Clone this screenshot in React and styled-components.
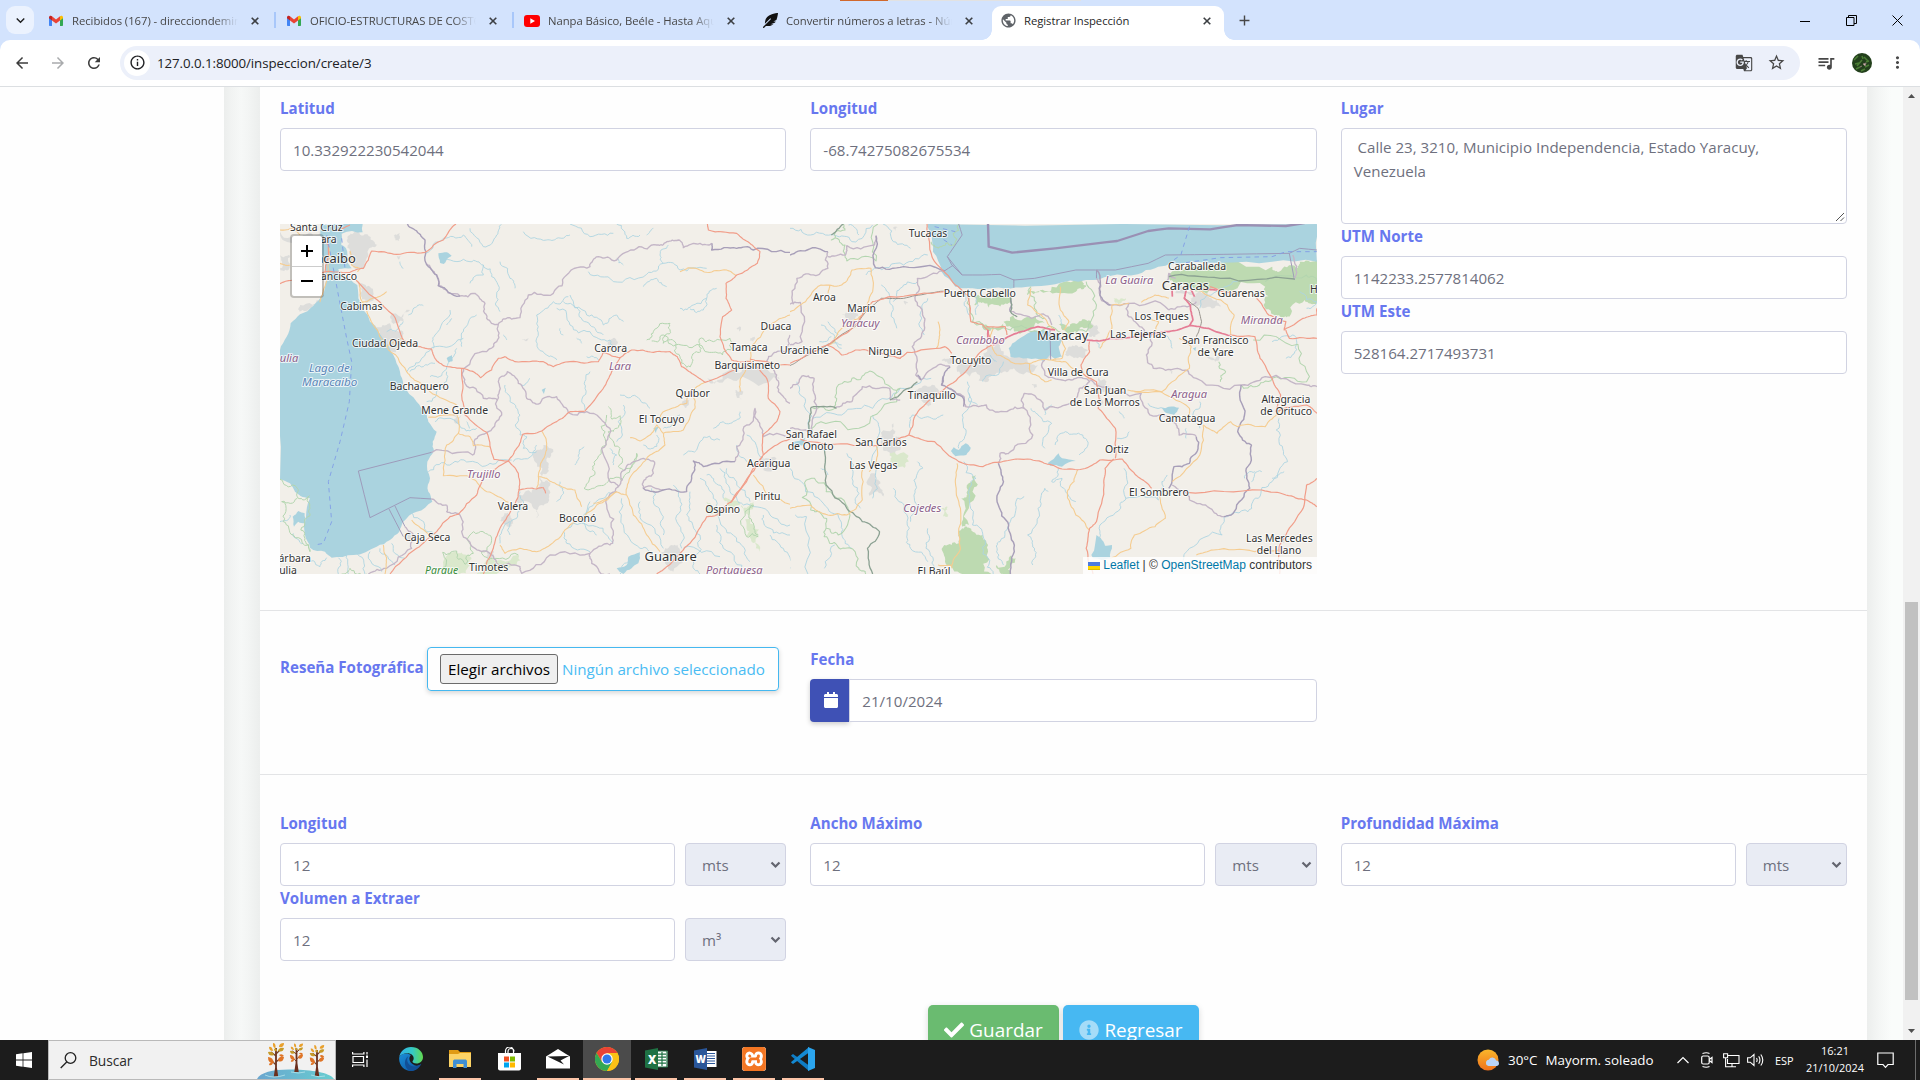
import React from "react";
import styled, { createGlobalStyle } from "styled-components";
import { MdArrowBack, MdArrowForward, MdRefresh, MdInfoOutline, MdGTranslate, MdStarBorder, MdQueueMusic, MdMoreVert, MdAdd, MdPublic, MdKeyboardArrowDown } from "react-icons/md";
import { FaCheck, FaInfoCircle, FaCalendar, FaFeatherAlt } from "react-icons/fa";
import { SiXampp } from "react-icons/si";

const ui = `"Open Sans", "Noto Sans", sans-serif`;

const GlobalStyle = createGlobalStyle`
  * { box-sizing: border-box; }
  html, body { margin: 0; padding: 0; overflow: hidden; }
  body { font-family: ${ui}; background: #fff; }
  svg { display: block; flex: none; }
`;

const Screen = styled.div`
  width: 1920px;
  height: 1080px;
  display: flex;
  flex-direction: column;
  overflow: hidden;
`;

/* ---------- Browser chrome ---------- */

const TabStrip = styled.header`
  position: relative;
  height: 40px;
  flex: none;
  display: flex;
  background: #d3e3fd;
  padding: 6px 0 0 6px;
`;
const TopProgress = styled.div`
  position: absolute;
  top: 0;
  left: 840px;
  width: 241px;
  height: 1px;
  background: linear-gradient(to right, #d0682c 48px, #e2e2e2 48px);
`;
const TabSearch = styled.div`
  width: 28px;
  height: 28px;
  border-radius: 9px;
  background: #ebf2fe;
  display: grid;
  place-items: center;
  color: #1f1f1f;
`;
const Tabs = styled.div`
  display: flex;
  margin-left: 4px;
`;
const Tab = styled.div`
  position: relative;
  width: 238px;
  height: 34px;
  padding: 0 13px 5px 10px;
  display: flex;
  align-items: center;
  color: ${(p) => (p.$active ? "#1f1f1f" : "#474747")};
  &::before {
    content: "";
    display: ${(p) => (p.$active ? "block" : "none")};
    position: absolute;
    inset: 0 4px 0 2px;
    background: #fff;
    border-radius: 9px 9px 0 0;
  }
  &::after {
    content: "";
    display: ${(p) => (p.$divider ? "block" : "none")};
    position: absolute;
    right: 0;
    top: 6px;
    width: 2px;
    height: 16px;
    background: #a8c7fa;
  }
  > * { position: relative; }
`;
const Flare = styled.span`
  && {
    position: absolute;
    bottom: 0;
    width: 10px;
    height: 10px;
    ${(p) => (p.$left ? "left: -8px" : "right: -6px")};
    background: radial-gradient(circle at ${(p) => (p.$left ? "0 0" : "10px 0")}, #d3e3fd 9.5px, #fff 10px);
  }
`;
const TabIcon = styled.span`
  width: 16px;
  margin-right: 8px;
  display: grid;
  place-items: center;
`;
const TabTitle = styled.span`
  flex: 1;
  font-size: 11.3px;
  letter-spacing: -0.05px;
  line-height: 16px;
  white-space: nowrap;
  overflow: hidden;
  ${(p) => (p.$fade ? "-webkit-mask-image: linear-gradient(to right, #000 86%, transparent); mask-image: linear-gradient(to right, #000 86%, transparent);" : "")}
`;
const TabClose = styled.span`
  width: 16px;
  margin-left: 9px;
  display: grid;
  place-items: center;
`;
const NewTab = styled.div`
  width: 28px;
  height: 28px;
  display: grid;
  place-items: center;
  color: #474747;
  margin-left: 2px;
`;
const WindowButtons = styled.div`
  margin-left: auto;
  display: flex;
  height: 28px;
  align-items: center;
`;
const WindowButton = styled.div`
  width: 46px;
  display: grid;
  place-items: center;
`;

const ToolbarBack = styled.div`
  background: #d3e3fd;
  flex: none;
`;
const Toolbar = styled.div`
  height: 47px;
  background: #fff;
  border-bottom: 1px solid #dcdfe2;
  border-radius: 10px 10px 0 0;
  display: flex;
  align-items: center;
  padding: 0 10px 1px 12px;
  color: #474747;
`;
const NavIcon = styled.div`
  width: 36px;
  display: flex;
  padding-left: 1px;
  color: ${(p) => (p.$dim ? "#a9abad" : "#3c3c3c")};
`;
const AddressBar = styled.div`
  width: 1680px;
  height: 34px;
  border-radius: 17px;
  background: #ecf0fa;
  display: flex;
  align-items: center;
  padding: 0 14px 0 4px;
  font-size: 13.3px;
  color: #202124;
`;
const SiteInfo = styled.span`
  width: 26px;
  height: 26px;
  border-radius: 13px;
  background: #fff;
  display: grid;
  place-items: center;
  margin-right: 7px;
`;
const Url = styled.span`
  flex: 1;
  letter-spacing: -0.07px;
`;
const BarIcons = styled.span`
  display: flex;
  gap: 14px;
  align-items: center;
  color: #474747;
`;
const ProfileIcons = styled.div`
  display: flex;
  align-items: center;
  margin-left: 16px;
  gap: 16px;
`;

/* ---------- Page ---------- */

const Viewport = styled.div`
  height: 953px;
  flex: none;
  display: flex;
  overflow: hidden;
`;
const Sidebar = styled.aside`
  width: 224px;
  background: #fefefe;
`;
const Main = styled.main`
  width: 1679px;
  padding: 0 36px;
  background: linear-gradient(to right, #eceeed 0, #f1f3f2 7px, #f6f8f7 17px, #f3f5f4 24px, #eceeed 36px, #eceeed 1643px, #f4f6f5 1655px, #fafcfb 1667px);
`;
const Card = styled.section`
  width: 1607px;
  height: 953px;
  background: #fefefe;
  padding-top: 9px;
  overflow: hidden;
`;
const Columns = styled.div`
  display: grid;
  grid-template-columns: repeat(${(p) => p.$n || 3}, minmax(0, 1fr));
  column-gap: 24px;
  padding: 0 ${(p) => (p.$inner ? 0 : 20)}px;
`;
const Wide = styled.div`
  grid-column: span 2;
`;
const Field = styled.div`
  width: 100%;
`;
const Label = styled.label`
  display: block;
  height: 24px;
  line-height: 24px;
  margin-bottom: 8px;
  font-size: 15.1px;
  font-weight: 700;
  color: #6777ef;
  white-space: nowrap;
`;
const Box = styled.div`
  height: ${(p) => p.$h || 43}px;
  flex: 1;
  border: 1px solid #d1d3e2;
  border-radius: ${(p) => (p.$joined ? "0 4px 4px 0" : "4px")};
  background: #fff;
  color: #6e707e;
  font-size: 15.1px;
  padding: ${(p) => (p.$area ? "6px 12px" : "0 12px")};
  line-height: ${(p) => (p.$area ? "24px" : "42px")};
  white-space: pre-wrap;
  position: relative;
`;
const Grip = styled.svg`
  position: absolute;
  right: 1px;
  bottom: 1px;
`;
const Measure = styled.div`
  display: flex;
  gap: 10px;
`;
const UnitSelect = styled.div`
  width: 101.3px;
  height: 43px;
  border: 1px solid #d1d3e2;
  border-radius: 4px;
  background: #e9ecf4;
  color: #6e707e;
  font-size: 15.1px;
  padding: 0 4px 0 16px;
  display: flex;
  align-items: center;
  justify-content: space-between;
`;
const Rule = styled.hr`
  border: 0;
  height: 1px;
  background: #e3e4e6;
  margin: ${(p) => p.$m};
`;
const FileRow = styled.div`
  display: flex;
`;
const FileLabel = styled.label`
  width: 147px;
  padding-top: 8px;
  line-height: 24px;
  font-size: 15.1px;
  font-weight: 700;
  color: #6777ef;
  white-space: nowrap;
`;
const FileInput = styled.div`
  width: 352px;
  height: 44px;
  border: 1px solid #45b8f0;
  border-radius: 4px;
  box-shadow: 0 2px 5px rgba(0, 0, 0, 0.16);
  padding: 0 12px;
  display: flex;
  align-items: center;
  gap: 4px;
  color: #4abcf3;
  font-size: 15.2px;
  white-space: nowrap;
`;
const FileButton = styled.span`
  width: 118px;
  height: 30px;
  line-height: 28px;
  border: 1px solid #6b6b6b;
  border-radius: 3px;
  background: #efefef;
  color: #000;
  text-align: center;
`;
const DateGroup = styled.div`
  display: flex;
`;
const DateIcon = styled.div`
  width: 39px;
  height: 43px;
  background: #3f51b5;
  border-radius: 4px 0 0 4px;
  box-shadow: 0 2px 5px rgba(0, 0, 0, 0.2);
  display: grid;
  place-items: center;
  color: #fff;
  padding: 0 0 2px 2px;
`;
const Actions = styled.div`
  display: flex;
  justify-content: center;
  gap: 4px;
  margin-top: 44px;
`;
const Action = styled.div`
  width: ${(p) => p.$w}px;
  height: 50px;
  border-radius: 5px;
  background: ${(p) => p.$bg};
  box-shadow: 0 2px 6px rgba(0, 0, 0, 0.15);
  color: #fff;
  font-size: 18.9px;
  display: flex;
  align-items: center;
  justify-content: center;
  gap: 5px;
`;
const Scrollbar = styled.div`
  width: 17px;
  background: #f1f1f1;
  display: flex;
  flex-direction: column;
  align-items: center;
  padding: 6px 0 6px;
`;
const Thumb = styled.div`
  width: 13px;
  height: 398px;
  margin: 504px 0 auto;
  background: #c1c1c1;
`;

/* ---------- Map ---------- */

const MapFrame = styled.div`
  position: relative;
  height: 350px;
  width: 1037px;
  margin-top: 53px;
  overflow: hidden;
  background: #f2efe9;
`;
const ZoomControl = styled.div`
  position: absolute;
  left: 10px;
  top: 10px;
  width: 34px;
  height: 64px;
  border: 2px solid rgba(0, 0, 0, 0.2);
  border-radius: 4px;
  background: #fff;
  background-clip: padding-box;
`;
const ZoomKey = styled.div`
  height: 30px;
  display: grid;
  place-items: center;
  & + & { height: 29px; border-top: 1px solid #ccc; padding-bottom: 1px; }
`;
const Attribution = styled.div`
  position: absolute;
  right: 0;
  bottom: 0;
  height: 17px;
  padding: 0 5px;
  display: flex;
  align-items: center;
  white-space: pre;
  font: 12px/17px "Liberation Sans", Arial, sans-serif;
  color: #333;
  background: rgba(255, 255, 255, 0.8);
  svg { margin-right: 3px; }
  a { color: #0078a8; }
`;

/* Deterministic midpoint displacement, gives lines a surveyed look. */
function rough(points, amp, depth = 2, closed = false) {
  let pts = points.trim().split(/\s+/).map((p) => p.split(",").map(Number));
  if (closed) pts.push(pts[0]);
  for (let d = 0; d < depth; d++) {
    const next = [];
    for (let i = 0; i < pts.length - 1; i++) {
      const [x1, y1] = pts[i];
      const [x2, y2] = pts[i + 1];
      const len = Math.hypot(x2 - x1, y2 - y1);
      const s = Math.sin(x1 * 12.9 + y2 * 78.2 + i * 3.1) * 43758.5;
      const r = (s - Math.floor(s) - 0.5) * 2;
      const k = len ? (r * amp * Math.min(len, 60)) / len : 0;
      next.push(pts[i], [(x1 + x2) / 2 - (y2 - y1) * k, (y1 + y2) / 2 + (x2 - x1) * k]);
    }
    next.push(pts[pts.length - 1]);
    pts = next;
  }
  return "M" + pts.map((p) => p[0].toFixed(1) + "," + p[1].toFixed(1)).join("L") + (closed ? "Z" : "");
}

const kinds = {
  water: { fill: "#aad3df", stroke: "none" },
  urban: { fill: "#dddddb", stroke: "none" },
  wood: { fill: "#bddab1", stroke: "none" },
  grass: { fill: "#dae8cc", stroke: "none" },
  river: { stroke: "#acd4e1", width: 2.6, amp: 0.24 },
  park: { stroke: "#b3d5af", width: 3, amp: 0.28 },
  border: { stroke: "#c4b6c7", width: 4, amp: 0.2 },
  dark: { stroke: "#a89fb9", width: 4.2, amp: 0.14 },
  forest: { stroke: "#8ba192", width: 3.8, amp: 0.12 },
  sea: { stroke: "#9a90b4", width: 7, amp: 0 },
  line: { stroke: "#9c97b8", width: 2.8, amp: 0 },
  minor: { stroke: "#f5cc90", width: 3.2, amp: 0.1 },
  major: { stroke: "#f19d89", width: 3.5, amp: 0.07 },
  motorway: { stroke: "#e57d95", width: 5, amp: 0.05 },
  rail: { stroke: "#8c8781", width: 2.6, amp: 0.04 },
  ferry: { stroke: "#829fe6", width: 2.8, amp: 0, dash: "13 12" },
};

const west = {
  water: [
    "30,405 50,365 62,325 90,298 130,272 160,240 168,150 152,90 150,27 278,27 278,52 215,56 214,90 228,100 232,140 245,160 205,162 215,182 262,210 265,250 300,320 340,372 370,420 390,470 400,510 440,560 470,595 475,620 500,650 488,680 492,708 472,740 480,790 475,830 487,860 440,890 400,920 388,950 360,975 320,995 250,1020 185,1028 165,1010 120,998 105,960 108,905 120,850 98,846 75,830 60,805 30,793",
    "505,115 530,112 545,122 530,135 522,147 510,143", "530,430 545,420 548,438 535,442", "1060,1077 1040,1060 1070,1050 1075,1025 1110,1012 1105,1045 1085,1060", "68,905 85,888 104,895 104,925 85,920 72,935", "815,525 828,518 822,538", "1150,640 1165,635 1158,655",
  ],
  urban: [
    "30,50 100,60 150,50 150,90 80,90 30,60", "230,75 250,55 290,58 305,75 322,88 295,105 285,150 262,165 240,120", "30,120 60,122 60,155 30,160", "90,270 155,245 125,278 88,290", "262,205 300,215 315,250 290,265 270,235", "315,330 360,325 400,350 400,375 350,400 330,375", "360,305 420,285 400,320 380,325", "800,705 820,690 842,700 830,740 835,770 810,790 795,740", "810,785 835,800 838,845 815,870 800,910 790,880 745,865 765,830 800,820", "690,905 720,900 730,925 700,925", "1310,490 1400,470 1450,455 1520,480 1530,492 1400,498 1330,505", "1395,525 1420,530 1415,552 1400,545", "1240,545 1258,555 1250,577 1235,565", "1170,1015 1205,990 1230,1005 1210,1070 1185,1045", "1015,375 1035,370 1035,400 1010,405", "1460,745 1520,730 1515,760 1480,765", "410,960 430,955 435,975 415,978", "548,598 575,600 570,630 555,625", "650,1000 672,1010 665,1030 650,1025",
    "370,60 390,55 388,78 375,75", "1400,340 1412,335 1408,350", "1440,370 1455,366 1450,380", "380,125 392,122 388,132", "755,372 775,370 770,378",
  ],
  grass: ["1420,880 1450,860 1440,910 1465,960 1468,1010 1445,980 1425,965 1430,930", "1310,860 1350,880 1340,900 1315,890", "1360,850 1410,860 1420,880 1370,870", "560,1010 590,1020 600,1050 560,1077 520,1050", "640,1050 745,1020 740,1050 680,1077 620,1077"],
  park: [
    "1130,375 1150,350 1200,325 1202,352 1180,385 1215,380 1230,425 1250,457 1265,425 1292,410 1288,372 1330,380 1380,370 1382,405 1330,412 1290,390 1225,388 1180,360 1145,378",
    "1015,575 1025,612 1050,602 1042,640 1015,650 1050,700 1045,755 1082,760 1100,715 1078,772 1020,790 990,812 942,820 975,770 975,738 1005,670 1010,600",
    "525,1077 518,1012 560,1008 585,1048 610,1015 592,972 640,950 662,962 635,1010 668,1030 745,1020", "30,793 75,812 85,850 118,842 120,880 104,920 105,970 120,1010 70,960 40,920 35,860 82,850",
    "1465,965 1430,965 1425,890 1450,870 1445,920 1465,960", "215,1077 240,1060 290,1077",
  ],
  river: [
    "465,115 520,70 580,60 605,95", "525,125 600,140 640,150 665,185 680,240 690,290", "640,150 640,180 600,205", "600,40 640,95 680,60 695,27", "760,50 830,75 860,70 900,60", "900,27 960,65 1030,55", "1040,27 1070,70 1110,60", "955,170 1030,200 1130,178 1180,145 1230,165 1310,160", "1180,145 1170,120 1195,90", "690,140 720,190 735,220",
    "800,300 800,370 830,420 860,435", "800,300 850,260 895,245", "880,260 930,290 960,330 1000,360", "860,280 900,330 960,350 1020,375 1045,410", "900,240 950,300 1000,330", "1000,330 1040,300 1060,320", "1120,215 1160,190 1190,215", "1230,280 1270,270 1310,250 1340,220", "1310,250 1300,285 1260,282",
    "490,400 495,360 540,285", "575,395 580,350 620,300", "415,300 440,275 460,272", "410,470 450,440 520,395 580,370", "350,350 380,345 400,320", "480,485 520,470 545,430 560,400", "470,560 510,520 530,470", "420,470 460,455 495,445",
    "705,510 720,560 750,600 750,660 770,665 760,700 800,710", "730,740 790,710 800,690", "475,770 530,750 600,740 660,745 725,735", "495,620 540,610 580,640 620,640", "960,470 945,520 945,585", "755,510 780,490", "950,425 985,435",
    "720,960 740,910 760,860 750,830", "690,985 700,940 720,920", "1050,540 1100,545 1140,580", "1060,570 1045,620 1040,680", "1180,640 1210,620 1230,600", "1160,660 1150,700 1120,690", "1330,640 1360,620 1400,615 1410,590", "1240,720 1290,680 1350,675", "880,950 890,985 960,1010", "890,940 980,935 1030,985", "960,860 960,950 980,960", "930,920 1000,850 1040,830",
    "1055,850 1060,930 1110,1000 1150,1020", "1110,860 1120,920 1180,1000", "1145,820 1150,860 1180,905 1180,960", "1210,810 1230,850 1220,920 1235,1000", "1260,830 1250,900 1290,960 1270,1040 1290,1077", "1290,790 1330,850 1350,920 1400,980 1440,1040", "1310,780 1345,810 1360,850", "1350,760 1380,830 1420,870 1500,900 1560,930", "1370,760 1400,800 1440,860", "1340,930 1360,1000 1420,1077", "1480,900 1500,940 1560,960", "1400,690 1430,740", "1430,660 1480,730", "1500,960 1540,1000 1560,1060", "1240,1000 1350,1025", "1050,1077 1075,1040 1110,1020",
    "205,1028 205,1077", "230,1020 235,1077", "262,1018 285,1077", "300,1010 335,1070", "330,1000 375,1050", "365,985 405,1030", "420,890 470,950 520,960", "70,955 100,985", "30,920 60,900", "170,1028 150,1055 120,1035", "1020,700 1040,720 1030,750", "915,750 925,720 942,695", "860,860 880,830 870,800",
    "530,330 545,310", "920,370 935,385", "870,340 880,360", "700,360 710,375", "390,140 400,160", "1130,60 1150,40", "1040,130 1060,150", "590,620 600,640",
  ],
  border: [
    "468,145 500,180 505,212 570,243 615,235 645,265 650,310 685,328 700,312 750,308 775,240 850,235 890,180 960,155 985,125 1040,135 1100,100 1160,90 1190,80 1225,75 1240,98 1290,85 1325,85",
    "685,328 680,380 650,410 580,462 585,505 640,550 682,555 685,500 712,470 745,505 770,550 810,565 860,545 895,592 950,590 1020,640 995,700 1020,800 1045,815 1055,770 1090,740 1150,738 1150,775 1120,800 1120,820 1180,825",
    "682,555 695,600 655,650 612,680 608,720 485,712", "530,870 530,890 565,895 575,950 615,1000 665,1020 680,1045 750,1055 755,1075 840,1020 960,1015 965,1045 1020,1077", "405,935 430,960 425,1000 350,1060 295,1077", "1045,815 1010,870 1030,960 1020,990 960,1015", "1560,565 1525,530 1520,480 1490,440 1510,415 1545,410 1560,360", "1395,740 1400,695 1430,630 1455,580 1465,620 1480,665 1560,668", "485,852 530,870",
  ],
  dark: ["412,27 435,45 465,75 468,145", "468,145 500,180 505,212 570,243", "1325,85 1325,105 1400,100 1450,105 1560,112", "1120,820 1180,825 1250,830 1265,790 1270,738 1300,755 1395,740"],
  line: ["485,712 265,768 300,908 420,848 485,852", "357,882 400,965", "375,873 405,935"],
  minor: [
    "265,200 270,240 310,330 350,395 410,470 445,500 480,530 560,570", "475,607 560,598 565,655 600,665 610,692 660,696", "565,655 530,690 520,782 600,785 620,800 650,830 715,862", "815,648 830,690 815,740 805,785 830,790 870,812 915,825 935,875", "970,865 1040,830 1070,840 1090,900 1130,960 1170,1010", "1040,830 980,870 900,930 840,990 800,1010 750,1000 705,1015 690,990",
    "1068,840 1085,780 1140,720 1185,690 1180,655 1160,630 1140,660 1110,678 1080,668", "1180,655 1240,645 1275,580 1270,540", "1165,625 1180,590 1250,565 1260,530 1305,502", "1230,170 1255,158 1310,172 1370,165 1400,182", "1440,440 1440,400 1500,330 1560,300", "1410,530 1410,500 1430,460", "1450,780 1500,850 1560,868", "345,1077 350,1030 340,990", "425,915 480,965", "150,262 160,225 175,170 175,90", "240,108 245,150 270,160 262,170", "270,265 350,230", "350,395 395,370", "30,45 70,40 90,60", "30,145 60,150", "805,785 800,820",
  ],
  major: [
    "30,206 100,185 160,172 240,172 280,160 305,108 380,118 465,112 520,75 558,27", "258,195 370,300 402,378 440,393 485,402 495,430 520,452 575,460 610,470 632,488 665,465 685,430 705,425 735,440 820,440 850,455 900,440 985,440 1000,412 1050,428 1085,405 1150,412 1200,410 1222,425 1235,455 1270,478 1305,502 1400,460 1440,452",
    "575,460 575,540 585,600 650,652 672,733 715,738 745,775 748,820 735,870 690,940 670,1000 640,1077", "715,738 740,700 758,658 815,648 860,620 900,590 945,588 1000,520 1025,470 1050,428", "715,738 640,790 620,840 565,898 540,905 500,950 440,1000 360,1077", "745,825 800,822 820,818 827,835",
    "1312,27 1315,45 1400,55 1440,85 1470,110 1462,145 1400,180 1368,205 1368,250 1385,285 1358,305 1350,365 1362,400 1385,435 1440,440 1465,460 1490,490 1495,550 1530,590 1520,620 1478,660 1480,720", "1480,720 1520,690 1560,672", "1440,432 1560,450", "150,65 175,90 165,172", "240,30 200,45",
    "1480,720 1440,780 1385,860 1340,900 1310,905 1260,985 1235,1010 1190,1055 1160,1077", "1478,724 1436,784 1381,864",
  ],
  ferry: ["170,60 190,160 205,240 230,370 245,440 238,560 210,680 175,800 185,920 160,985 135,990", "215,70 225,160"],
};

const east = {
  water: [
    "400,27 412,60 415,110 440,170 480,215 500,220 560,222 620,220 690,215 770,208 860,195 930,183 1010,178 1060,160 1100,148 1250,143 1400,140 1530,140 1530,27",
    "635,400 660,375 700,350 735,345 775,355 790,375 780,395 790,425 770,432 755,420 735,438 690,430 640,425", "467,708 475,697 490,705 510,685 525,698 512,720 480,724", "748,745 780,715 790,730 830,738 790,755 755,752", "875,1020 890,960 902,968 915,992 935,990 930,1030 880,1030", "1080,580 1100,575 1130,578 1115,600 1095,595", "1180,395 1170,400 1178,408", "10,680 45,668 40,690 15,690",
  ],
  wood: [
    "1100,185 1140,165 1250,145 1400,155 1420,170 1470,160 1480,140 1530,135 1530,262 1495,255 1450,305 1420,300 1375,270 1380,215 1240,220 1120,205", "497,850 515,840 528,785 540,782 530,830 520,930 500,935", "500,940 520,938 560,960 575,1010 585,1077 500,1077 450,1040 448,990 490,985", "615,1077 600,1050 640,1022 655,1030 640,1077",
    "530,240 560,250 600,232 640,245 640,262 600,270 560,262 535,270", "620,320 680,310 740,325 700,345 640,335", "780,330 820,325 860,315 880,335 840,345 790,345", "690,225 760,215 850,200 860,215 830,230 740,228 690,240", "560,330 620,325 610,345 570,345",
  ],
  grass: ["290,715 330,712 345,740 310,755 290,740", "440,878 458,876 460,900 445,905", "940,250 975,250 960,265"],
  urban: [
    "485,470 560,425 570,390 600,385 620,420 690,440 720,450 650,460 620,470 590,480 575,500 540,470 500,480", "365,525 400,515 430,540 410,570 385,560", "225,795 245,775 262,800 268,830 275,845 230,842", "260,670 300,625 300,665 325,680 300,720 270,700", "800,410 830,390 865,405 860,430 820,425", "860,335 890,330 900,355 870,365", "150,300 185,290 200,305 170,325", "1170,245 1200,235 1240,255 1250,275 1200,280 1175,270", "1125,215 1200,225 1180,240 1120,235", "895,490 920,500 915,530 895,515", "1210,425 1250,420 1235,440", "440,435 470,420 470,445", "740,405 757,410 750,435 735,430", "1420,965 1440,960 1432,985", "890,525 910,560 900,570",
    "750,385 760,380 762,392", "300,40 312,38 308,48", "330,260 342,262 336,270", "700,510 715,508 710,520", "1100,470 1112,468 1108,478",
  ],
  river: [
    "0,760 45,830 110,880 150,930 160,985 180,1000", "15,900 48,905 52,1077", "100,1060 130,990", "90,760 110,780", "165,715 180,790 190,850 205,880", "240,850 250,790 240,720 260,640 240,600", "300,820 330,880 340,960 350,1000 400,1040", "370,740 385,760 365,810 370,870 350,920", "400,940 395,1000 420,1060", "350,640 355,600 400,605 445,600",
    "520,535 500,600 510,660 490,700", "515,500 520,560 545,570", "505,740 540,790 520,850 530,930 560,960 575,1030 590,1077", "620,1050 600,1010 610,980 640,920 660,850 680,845", "705,1050 710,1000 690,960 720,880 740,820 750,830", "780,760 760,800 790,790 800,830 830,860", "700,580 720,600 760,625 740,700", "740,600 760,570", "770,690 800,650 850,660 865,690 840,720", "950,670 985,650", "955,590 970,610",
    "970,760 975,850 960,880 900,930 895,970", "975,850 1070,855 1080,800 1095,780", "1040,565 1100,590", "1150,640 1150,670", "1190,560 1170,600 1190,640", "930,1060 890,1000", "1420,610 1420,680 1445,740 1400,800 1360,850 1330,890 1260,905 1255,960 1160,1000 1110,1077", "1370,770 1340,800", "1435,770 1400,790",
    "270,27 300,80 350,100", "265,210 290,265 310,340", "300,260 320,220 370,200", "240,30 180,80 130,60 60,60 0,40", "170,30 200,60", "90,330 130,365 150,400", "110,320 140,360", "85,380 120,365", "0,410 100,400 150,390", "245,160 330,150 400,120", "245,160 220,180", "20,500 45,560 60,650", "65,610 150,600 240,580 320,520 410,490", "390,360 380,290 400,250", "520,300 510,240 500,225", "540,240 540,300", "1300,200 1250,220 1190,280", "1400,380 1460,360 1470,390 1440,430", "1090,360 1110,400", "1320,790 1350,770", "560,500 580,480 620,440", "580,420 600,440", "780,300 790,330", "890,380 900,400", "1480,230 1530,260 1500,280",
  ],
  park: [
    "155,27 160,45 120,75 160,90 165,138 250,138 255,27", "490,27 478,90 440,95 410,80", "60,650 90,620 200,640 310,560 320,520 260,485 215,480 180,490 135,535 130,580 65,578", "42,803 100,803 105,830 170,890 140,960 105,940 85,890 60,885 42,803", "105,940 115,985 160,1000 200,1060 220,1077",
    "530,320 640,345 700,350 770,340 860,350 890,270 860,200", "1345,375 1475,388 1500,500 1400,490 1350,515 1310,510", "1250,500 1265,470 1245,440", "1380,200 1500,180 1530,200", "520,245 530,320 570,345", "700,215 710,280 740,310",
  ],
  border: [
    "0,520 35,483 70,490 70,560 60,650", "0,268 30,262 35,380 0,390", "110,110 110,160 75,182 20,190 10,268", "110,125 160,120 165,92 245,90 250,62", "445,168 370,190 365,240 385,300 385,350 355,395 365,480 380,495", "60,650 0,640", "130,578 180,560 210,515 290,520 290,550 320,555", "380,495 430,450 465,455", "460,520 505,545 510,575 570,570 630,590 680,580 680,535 740,585 800,570 840,520 870,500 830,490 790,495 740,480 740,435", "680,580 705,660 640,710 610,715 605,745",
    "870,495 890,510 1020,535 1045,600 1120,625 1130,660 1180,665", "1110,810 1160,855 1220,880 1260,905", "1100,285 1135,275 1180,260", "890,190 900,240 930,270 985,265 1100,285", "985,265 980,300 1015,335 1050,360 1035,420 1055,460 1125,460 1180,490 1310,510", "1310,510 1380,485 1500,510 1530,515", "1460,120 1465,190", "640,290 700,310 740,300 760,330", "1085,220 1100,175 1120,190",
  ],
  dark: ["0,120 50,105 110,110", "250,62 248,158 330,155 450,168", "380,495 370,480", "440,510 445,485 465,455", "640,250 640,290", "890,165 900,240 930,270", "1180,665 1185,700 1160,745 1115,755 1100,820", "605,745 620,800 605,870 635,930 650,1000 640,1077", "1310,510 1320,600 1300,650 1340,690 1325,760 1335,820 1290,890 1260,905", "445,485 440,510 500,545 505,575"],
  forest: ["60,578 55,640 70,670", "60,578 135,580", "290,555 370,500", "100,700 105,810 165,880 210,920 260,950 225,1000 240,1077", "640,245 640,290 660,305", "1100,185 1250,190 1465,192", "155,27 120,60"],
  sea: ["575,27 577,95 645,113 770,100 890,85 950,78 1040,48 1100,40 1220,43 1300,30 1440,33 1530,18"],
  line: ["490,27 500,60 470,105 457,125 470,150 500,180 560,180 610,178 650,195 710,190 830,165 945,165 1040,145 1090,120 1260,118 1450,115 1465,195", "650,193 650,218", "755,345 757,435", "890,165 890,190", "457,125 500,180", "445,170 475,150", "1450,115 1480,100 1530,105"],
  minor: [
    "0,290 45,260 90,210 150,210 180,165 235,160 240,230 210,300 150,340 130,380 108,390", "115,210 110,235", "585,390 600,420 640,440 700,445 760,435 790,430 800,400 790,370", "695,445 700,475 740,500 760,495", "760,435 800,440 850,475 870,492", "700,220 690,270 740,310 770,345", "785,215 785,285 810,320 795,345", "980,525 1080,530 1160,460 1165,395 1130,370", "1000,530 1080,532 1160,580 1165,620", "430,320 435,360 425,400", "900,400 935,340 935,270 985,265", "1185,225 1270,270 1290,300 1280,360", "1060,355 1070,320 1040,310",
    "0,880 60,870 110,900 165,900 210,855 215,745", "250,690 250,740 230,770", "485,745 480,800 495,880 495,1000 470,1060", "430,1050 470,1050", "835,765 825,800 805,830 830,900 870,945", "1200,630 1190,720 1110,800", "1200,630 1240,655 1280,620 1300,635 1380,635 1420,590 1440,565", "1075,835 1090,910 1060,935 1000,960 990,1000 930,1030", "1180,1020 1230,1005 1350,1010 1420,1005", "1100,250 1060,240 1020,262", "590,340 580,370",
  ],
  major: [
    "398,27 405,80 420,140 480,210 515,240 525,320 560,330 575,345 590,390", "108,390 150,420 190,405 240,410 320,430 340,412 450,395 470,415", "585,390 545,420 510,470 450,520 400,560 360,610 345,660 260,690 110,688 30,672", "345,660 420,680 490,740 560,755 600,742 690,732 755,748 790,762 850,762 900,735 965,732 1010,785 1050,820", "870,380 870,410 845,450 850,475 890,500 895,580 945,640 945,730", "940,732 915,760 912,810 890,920 870,940 860,1000 880,1077", "1150,832 1370,825 1440,840 1500,855 1530,875", "1530,790 1500,810 1490,880 1440,960 1420,1000 1422,1077",
    "1355,250 1390,300 1440,320 1435,345 1490,310 1530,300 1530,280", "1440,345 1450,370 1530,370", "1280,360 1350,365 1365,430 1400,490 1425,540 1410,590 1500,570 1530,595", "0,445 108,390 180,340 240,260 290,245 450,230", "1220,215 1300,240", "570,335 625,335 630,360",
  ],
  motorway: ["590,390 640,362 720,335 770,345", "860,375 900,378 930,370 1000,365 1100,350 1160,332 1215,340 1280,362", "1160,332 1170,315 1162,270 1145,250 1150,225", "1110,225 1110,245", "1165,225 1175,245", "1190,222 1240,225", "575,345 575,375"],
  rail: ["450,228 400,235 330,250 265,250 220,290 195,330 108,390 20,440 0,452", "1145,250 1185,280 1195,320 1180,365"],
  ferry: ["1160,35 1135,120 1100,145", "1150,143 1250,128 1400,125 1440,110 1530,110", "425,60 470,90", "420,35 480,50"],
};

const westLabels = [
  ["Santa Cruz", 139, 46], ["ara", 176, 83], ["acaibo", 198, 143, "city"], ["ancisco", 207, 193], ["Cabimas", 274, 284], ["Ciudad Ojeda", 345, 395], ["ulia", 57, 440, "state"], ["Lago de", 178, 468, "lake"], ["Maracaibo", 179, 511, "lake"], ["Bachaquero", 448, 523], ["Mene Grande", 554, 594], ["Carora", 1022, 409], ["Lara", 1050, 463, "state"], ["Tamaca", 1437, 406], ["Barquisimeto", 1432, 461], ["Quíbor", 1268, 544], ["El Tocuyo", 1175, 621], ["Acarigua", 1496, 753], ["Píritu", 1492, 852], ["Ospino", 1358, 892], ["Trujillo", 641, 786, "state"], ["Valera", 729, 882], ["Boconó", 923, 919], ["Caja Seca", 472, 976], ["Guanare", 1202, 1035, "city"], ["Timotes", 656, 1067], ["Portuguesa", 1393, 1074, "state"], ["Parque", 515, 1075, "park"], ["árbara", 74, 1039], ["ulia", 54, 1075], ["Duaca", 1518, 344],
];
const eastLabels = [
  ["Tucacas", 401, 64], ["Aroa", 100, 257], ["Marín", 208, 289], ["Yaracuy", 204, 335, "state"], ["Urachiche", 42, 416], ["Nirgua", 276, 419], ["Carabobo", 553, 385, "state"], ["Tocuyito", 525, 445], ["Puerto Cabello", 551, 244], ["Maracay", 792, 374, "city"], ["La Guaira", 985, 205, "state"], ["Caraballeda", 1182, 163], ["Caracas", 1148, 224, "city"], ["Guarenas", 1310, 245], ["H", 1521, 233], ["Los Teques", 1079, 313], ["Miranda", 1370, 325, "state"], ["Las Tejerías", 1011, 366], ["San Francisco", 1235, 385], ["de Yare", 1236, 421], ["Villa de Cura", 837, 482], ["San Juan", 915, 534], ["de Los Morros", 914, 571], ["Tinaquillo", 412, 549], ["Aragua", 1159, 546, "state"], ["Camatagua", 1153, 620], ["Altagracia", 1440, 562], ["de Orituco", 1441, 598], ["San Rafael", 62, 666], ["de Onoto", 60, 702], ["San Carlos", 264, 691], ["Las Vegas", 242, 760], ["Ortiz", 949, 712], ["El Sombrero", 1071, 842], ["Cojedes", 384, 889, "state"], ["Las Mercedes", 1421, 979], ["del Llano", 1420, 1016], ["El Baúl", 418, 1077],
];

const MapText = styled.text`
  font-family: "Noto Sans", sans-serif;
  text-anchor: middle;
  paint-order: stroke;
  stroke: rgba(255, 255, 255, 0.75);
  stroke-width: 2px;
  stroke-linejoin: round;
  font-size: ${(p) => ({ city: 12.9, lake: 11.6, state: 11.1 }[p.$kind] || 10.45)}px;
  font-style: ${(p) => (["lake", "state", "park"].includes(p.$kind) ? "italic" : "normal")};
  fill: ${(p) => ({ lake: "#5b86b8", state: "#8d618b", park: "#3a8c3a" }[p.$kind] || "#333")};
`;

const Terrain = ({ data, transform }) => (
  <g transform={transform}>
    {["urban", "grass", "wood", "water", "river", "park", "line", "sea", "border", "dark", "forest", "minor", "rail", "major", "motorway", "ferry"].map((k) =>
      (data[k] || []).map((pts, i) => {
        const s = kinds[k];
        const area = !!s.fill;
        return (
          <path
            key={k + i}
            d={area ? rough(pts, k === "water" ? 0.1 : 0.34, k === "water" ? 2 : 3, true) : rough(pts, s.amp, s.amp ? 3 : 1)}
            fill={s.fill || "none"}
            stroke={s.stroke}
            strokeWidth={s.width}
            strokeDasharray={s.dash}
            strokeLinejoin="round"
          />
        );
      })
    )}
  </g>
);

const RegionMap = () => (
  <MapFrame>
    <svg width="1037" height="350" viewBox="0 0 1037 350">
      <defs>
        <clipPath id="westHalf"><rect width="510.5" height="350" /></clipPath>
        <clipPath id="eastHalf"><rect x="510" width="527" height="350" /></clipPath>
      </defs>
      <g clipPath="url(#westHalf)"><Terrain data={west} transform="translate(-10 -9) scale(0.33333)" /></g>
      <g clipPath="url(#eastHalf)"><Terrain data={east} transform="translate(510 -9) scale(0.34436 0.33333)" /></g>
      {westLabels.map(([t, x, y, k], i) => <MapText key={i} $kind={k} x={x / 3 - 10} y={y / 3 - 8.2}>{t}</MapText>)}
      {eastLabels.map(([t, x, y, k], i) => <MapText key={i} $kind={k} x={x * 0.34436 + 510} y={y / 3 - 8.2}>{t}</MapText>)}
    </svg>
    <ZoomControl>
      <ZoomKey><svg width="12" height="12"><path d="M6 0v12M0 6h12" stroke="#000" strokeWidth="2" /></svg></ZoomKey>
      <ZoomKey><svg width="12" height="12"><path d="M0 6h12" stroke="#000" strokeWidth="2" /></svg></ZoomKey>
    </ZoomControl>
    <Attribution>
      <svg width="12" height="8"><path fill="#4c7be1" d="M0 0h12v4H0z" /><path fill="#ffd500" d="M0 4h12v3H0z" /><path fill="#e0bc00" d="M0 7h12v1H0z" /></svg>
      <a>Leaflet</a> | © <a>OpenStreetMap</a> contributors
    </Attribution>
  </MapFrame>
);

/* ---------- Taskbar ---------- */

const Taskbar = styled.footer`
  height: 40px;
  flex: none;
  background: #1c1c1c;
  display: flex;
  color: #fff;
`;
const StartCell = styled.div`
  width: 48px;
  display: grid;
  place-items: center;
`;
const SearchBox = styled.div`
  width: 288px;
  border: 1px solid #b9b9b9;
  background: #f1f1f1;
  color: #2b2b2b;
  display: flex;
  align-items: center;
  padding-left: 11px;
  font-size: 13.8px;
  letter-spacing: -0.1px;
`;
const SearchText = styled.span`
  flex: 1;
  padding-left: 12px;
`;
const TaskCell = styled.div`
  width: 48px;
  height: 40px;
  margin-right: ${(p) => p.$gap || 1}px;
  display: flex;
  justify-content: center;
  align-items: center;
  background: ${(p) => (p.$active ? "#4b4b4b" : "transparent")};
  border-bottom: 2px solid transparent;
  border-image: ${(p) => (p.$active ? "linear-gradient(#fcc5a8,#fcc5a8) 1" : p.$open ? "linear-gradient(to right, transparent 4px, #fcc5a8 4px, #fcc5a8 44px, transparent 44px) 1" : "none")};
`;
const Tray = styled.div`
  margin-left: auto;
  width: 443px;
  display: flex;
  align-items: center;
  font-size: 13.4px;
`;
const Weather = styled.div`
  width: 194px;
  display: flex;
  align-items: center;
  white-space: pre;
  gap: 8px;
`;
const TrayIcon = styled.div`
  width: 24px;
  display: grid;
  place-items: center;
`;
const Lang = styled.div`
  width: 29px;
  padding-left: 8px;
  font-size: 10.9px;
`;
const Clock = styled.div`
  width: 74px;
  text-align: center;
  font-size: 10.9px;
  line-height: 17px;
  padding: 0 0 2px 4px;
`;
const Notices = styled.div`
  width: 36px;
  padding-left: 7px;
`;
const PeekEdge = styled.div`
  width: 5px;
  height: 40px;
  margin-left: auto;
  border-left: 1px solid #6d6d6d;
`;

const Gmail = () => (
  <svg width="14" height="12" viewBox="0 1 14 12">
    <path fill="#4285f4" d="M0 3.500v7.500c0 .6.4 1 1 1h2V5.500z" /><path fill="#34a853" d="M14 3.500v7.500c0 .6-.4 1-1 1h-2V5.500z" />
    <path fill="#ea4335" d="M3 2.300 7 5.400l4-3.100v4.200L7 9.500 3 6.500z" /><path fill="#c5221f" d="M0 3.500C0 1.900 1.800 1.200 3 2.300v4.200L0 4.300z" /><path fill="#fbbc04" d="M14 3.500c0-1.600-1.800-2.300-3-1.200v4.200l3-2.200z" />
  </svg>
);
const Youtube = () => (
  <svg width="16" height="12" viewBox="0 0 16 12"><rect width="16" height="12" rx="3" fill="#f00" /><path fill="#fff" d="M6.300 3.300v5.400L11 6z" /></svg>
);
const Cross = () => (
  <svg width="8" height="8" viewBox="0 0 8 8"><path d="M.7.7l6.600 6.600M7.300.7.7 7.300" stroke="#3c3f43" strokeWidth="1.600" /></svg>
);
const Caret = () => (
  <svg width="11" height="8" viewBox="0 0 11 8"><path d="M1.500 1.500 5.500 5.500 9.500 1.500" fill="none" stroke="#63656f" strokeWidth="2.200" /></svg>
);
const Autumn = () => (
  <svg width="78" height="38" viewBox="0 0 78 38">
    <defs><linearGradient id="pond"><stop stopColor="#6aa6cf" /><stop offset="1" stopColor="#68cdd0" /></linearGradient></defs>
    <path fill="url(#pond)" d="M0 38C3 31 18 28 36 28.500S72 31 77 38z" />
    {[[19, 2, 35.500, 1], [39.500, 2.500, 31, 0.82], [60, 4, 35, 0.9]].map(([x, t, b, k]) => (
      <g key={x}>
        <path d={`M${x - 2.200} ${b}L${x - 0.900} ${b - 9}V${t + 5}h1.800V${b - 9}l1.300 9z`} fill="#6b2f1d" />
        <g transform={`translate(${x} ${t}) scale(${k})`}>
          <path d="M0 22l-5-5M0 19l6-5M0 13l-5-4M0 11l5-5" stroke="#6f3a22" strokeWidth="1.200" fill="none" />
          <g fill="#e8a02c"><path d="M-3 0q3 0 2.500 5q-3 0-2.500-5zM-7 4q3-1 4 4q-4 0-4-4zM3 4q0-4 5-4q0 5-5 4z" /></g>
          <g fill="#c59a28"><path d="M2 8q1-4 6-3q-1 5-6 3zM-8 9q5-1 6 3q-5 2-6-3zM-2 6q3-2 3 2q-3 1-3-2z" /></g>
          <g fill="#df7426"><path d="M-8 14q5 0 6 6q-6 1-6-6zM2 18q0-5 6-4q-1 6-6 4zM-3 20q-1 3-4 2q0-3 4-2zM3 12q3-2 5 1q-3 2-5-1z" /></g>
        </g>
      </g>
    ))}
    <path d="M8 34q8 4 20 0M34 31q8 2 14 0M54 34q8 3 14 1" stroke="#b5e3ea" fill="none" strokeWidth=".8" />
  </svg>
);
const TaskView = () => (
  <svg width="17" height="17" viewBox="0 0 17 17" fill="none" stroke="#fff" strokeWidth="1.200">
    <path d="M1 5.500h10.500v6H1zM.6 1v2h11.300V1M.6 16v-2h11.300v2M15 1v2.500M15 8.500V16" /><path d="M14 4.500h2v2.500h-2z" fill="#fff" stroke="none" />
  </svg>
);
const Edge = () => (
  <svg width="24" height="24" viewBox="0 0 24 24">
    <defs>
      <linearGradient id="e1" x1="0" x2="1"><stop stopColor="#2fb1ea" /><stop offset=".55" stopColor="#35c9c6" /><stop offset="1" stopColor="#62d94e" /></linearGradient>
      <linearGradient id="e2" x1="0" y1="0" x2="1" y2="1"><stop stopColor="#1b8fd8" /><stop offset="1" stopColor="#0b4f9e" /></linearGradient>
    </defs>
    <path fill="url(#e2)" d="M.2 10.500C2 6.500 8 5 12 8c-3 3-2 8 4 10.500 2.500.5 5-.5 6.200-1.500C19.500 21.500 16 24 12 24 5 24-.5 18 .2 10.500z" />
    <path fill="#124f96" d="M9.500 9c-3 4-.5 11 6.500 10.500 2.500 0 5-1 6.500-3C20 21.500 15.500 24.500 11 23.700 4.500 21 4.500 12 9.500 9z" />
    <path fill="url(#e1)" d="M.2 10.500C1 4.500 6 0 12 0c7.500 0 12 5 12 10 0 4-3 6.500-6.500 6.500-3 0-4-1.200-4-2 0-.7 1.200-1.200 1.200-3.300 0-2.700-2.700-5-6.200-5C4.500 6.200 1 8 .2 10.500z" />
  </svg>
);
const Folder = () => (
  <svg width="22" height="18" viewBox="0 0 22 18"><path fill="#e09b14" d="M0 0h9l2 2h11v4H0z" /><path fill="#fcd366" d="M0 4h9l2-1h11v14H0z" /><path fill="#3f8fd4" d="M4 18v-6.500C4 10 5 9.500 6 9.500h10c1 0 2 .5 2 2V18h-3.500v-4h-7v4z" /></svg>
);
const Store = () => (
  <svg width="23" height="24" viewBox="0 0 23 24"><path d="M7.500 6V4a4 4 0 0 1 8 0v2M10 6V4.500a3 3 0 0 1 6 0" fill="none" stroke="#fff" strokeWidth="1.200" /><path fill="#fff" d="M0 6h23v15.500q0 2-2 2H2q-2 0-2-2z" /><path fill="#f25022" d="M6 9.500h5v5H6z" /><path fill="#7fba00" d="M12 9.500h5v5h-5z" /><path fill="#00a4ef" d="M6 15.500h5v5H6z" /><path fill="#ffb900" d="M12 15.500h5v5h-5z" /></svg>
);
const Mail = () => (
  <svg width="24" height="20" viewBox="0 0 24 20"><path fill="#fff" d="M0 7.500 12 0l12 7.500V19.500H0z" /><path fill="#1c1c1c" d="M1.500 7.500 23 7l-8.500 4.500 3.500 4z" /></svg>
);
const Chrome = () => (
  <svg width="24" height="24" viewBox="0 0 24 24"><circle cx="12" cy="12" r="12" fill="#fbc116" /><path fill="#ea4335" d="M1.600 6A12 12 0 0 1 22.400 6H12L7 15z" /><path fill="#34a853" d="M1.600 6A12 12 0 0 0 12 24l5.200-9H7z" /><path fill="#fbc116" d="M22.400 6H12l5.200 9L12 24A12 12 0 0 0 22.400 6z" /><circle cx="12" cy="12" r="5.700" fill="#fff" /><circle cx="12" cy="12" r="4.500" fill="#3278ea" /></svg>
);
const OfficeLetter = styled.span`
  position: relative;
  width: 22px;
  height: 22px;
  display: flex;
  align-items: center;
  font-size: ${(p) => (p.$wide ? 10 : 11.5)}px;
  font-weight: 700;
  color: #fff;
  padding-left: ${(p) => (p.$wide ? 1.5 : 3)}px;
  svg { position: absolute; left: 0; top: 0; }
  b { position: relative; }
`;
const Office = ({ letter, color, wide }) => (
  <OfficeLetter $wide={wide}>
    <svg width="23" height="22" viewBox="0 0 23 22">
      <path fill="#fff" d="M12 3h10.500v16H12z" />
      {wide ? <path d="M13 5.500h8M13 8h8M13 10.500h8M13 13h8M13 15.500h8" stroke={color} strokeWidth="1.200" /> : <path d="M12 3h10v16H12M13 6.200h8M13 9.200h8M13 12.200h8M13 15.200h8M17 4v14" fill="none" stroke={color} strokeWidth="1.200" />}
      <path fill={color} d="M0 2.500 13 0v22L0 19.500z" />
    </svg>
    <b>{letter}</b>
  </OfficeLetter>
);
const VsCode = () => (
  <svg width="24" height="24" viewBox="0 0 24 24"><path fill="#0f7cc4" d="M0 8.500 2 7l16 11.500V24L1 9.800z" /><path fill="#1489d2" d="M0 15.500 2 17 18 5.500V0L1 14.200z" /><path fill="#2ba5ee" d="M17 0 24 3v18l-7 3z" /></svg>
);
const XamppTile = styled.span`
  width: 24px;
  height: 24px;
  border-radius: 3px;
  background: #fff;
  color: #f37623;
  overflow: hidden;
`;

const apps = [
  { icon: <Edge /> },
  { icon: <Folder />, open: true },
  { icon: <Store /> },
  { icon: <Mail />, open: true },
  { icon: <Chrome />, active: true },
  { icon: <Office letter="X" color="#1f7244" />, open: true },
  { icon: <Office letter="W" color="#2a5699" wide />, open: true },
  { icon: <XamppTile><SiXampp size={24} /></XamppTile>, open: true },
  { icon: <VsCode />, open: true },
];

const tabs = [
  { icon: <Gmail />, title: "Recibidos (167) - direcciondemineria", divider: true },
  { icon: <Gmail />, title: "OFICIO-ESTRUCTURAS DE COSTOS", divider: true },
  { icon: <Youtube />, title: "Nanpa Básico, Beéle - Hasta Aquí" },
  { icon: <FaFeatherAlt size={15} color="#111" />, title: "Convertir números a letras - Número" },
  { icon: <MdPublic size={17} color="#5f6368" />, title: "Registrar Inspección", active: true },
];

const Quantity = ({ label, unit = "mts" }) => (
  <Field>
    <Label>{label}</Label>
    <Measure>
      <Box>12</Box>
      <UnitSelect>{unit}<Caret /></UnitSelect>
    </Measure>
  </Field>
);

export default function App() {
  return (
    <Screen>
      <GlobalStyle />
      <TabStrip>
        <TopProgress />
        <TabSearch><MdKeyboardArrowDown size={17} /></TabSearch>
        <Tabs>
          {tabs.map((t, i) => (
            <Tab key={i} $active={t.active} $divider={t.divider}>
              {t.active && <><Flare $left /><Flare /></>}
              <TabIcon>{t.icon}</TabIcon>
              <TabTitle $fade={!t.active}>{t.title}</TabTitle>
              <TabClose><Cross /></TabClose>
            </Tab>
          ))}
        </Tabs>
        <NewTab><MdAdd size={17} /></NewTab>
        <WindowButtons>
          <WindowButton><svg width="10" height="10"><path d="M0 6.500h10" stroke="#000" /></svg></WindowButton>
          <WindowButton><svg width="11" height="11" fill="none" stroke="#000"><path d="M.5 2.500h7.500v8H.5zM2.500 2.500v-2h8v8H8" /></svg></WindowButton>
          <WindowButton><svg width="11" height="11"><path d="M.5.5l10 10M10.500.5l-10 10" stroke="#000" /></svg></WindowButton>
        </WindowButtons>
      </TabStrip>
      <ToolbarBack>
        <Toolbar>
          <NavIcon><MdArrowBack size={18} /></NavIcon>
          <NavIcon $dim><MdArrowForward size={18} /></NavIcon>
          <NavIcon><MdRefresh size={18} /></NavIcon>
          <AddressBar>
            <SiteInfo><MdInfoOutline size={17} /></SiteInfo>
            <Url>127.0.0.1:8000/inspeccion/create/3</Url>
            <BarIcons><MdGTranslate size={18} /><MdStarBorder size={19} /></BarIcons>
          </AddressBar>
          <ProfileIcons>
            <MdQueueMusic size={20} />
            <svg width="20" height="20" viewBox="0 0 20 20"><circle cx="10" cy="10" r="10" fill="#23401c" /><path d="M2 7l4-4M5 13l5-6M12 4l4 4M4 16l4-2M13 14l4-2M9 18l4-2M10 3l1 3M3 11l4-1M14 9l3-1" stroke="#4b7d35" strokeWidth="1.500" /><path d="M11 11l3-1-1 3zM8 14l2-1" fill="#cbb8ae" stroke="#8f8078" /></svg>
            <MdMoreVert size={19} />
          </ProfileIcons>
        </Toolbar>
      </ToolbarBack>

      <Viewport>
        <Sidebar />
        <Main>
          <Card>
            <Columns>
              <Wide>
                <Columns $n={2} $inner>
                  <Field><Label>Latitud</Label><Box>10.332922230542044</Box></Field>
                  <Field><Label>Longitud</Label><Box>-68.74275082675534</Box></Field>
                </Columns>
                <RegionMap />
              </Wide>
              <div>
                <Field>
                  <Label>Lugar</Label>
                  <Box $area $h={96}>{" Calle 23, 3210, Municipio Independencia, Estado Yaracuy,\nVenezuela"}
                    <Grip width="10" height="10"><path d="M1 9 9 1M5.500 9 9 5.500" stroke="#555" fill="none" /></Grip>
                  </Box>
                </Field>
                <Field><Label>UTM Norte</Label><Box>1142233.2577814062</Box></Field>
                <Field><Label>UTM Este</Label><Box>528164.2717493731</Box></Field>
              </div>
            </Columns>
            <Rule $m="36px 0 36px" />
            <Columns>
              <FileRow>
                <FileLabel>Reseña Fotográfica</FileLabel>
                <FileInput><FileButton>Elegir archivos</FileButton>Ningún archivo seleccionado</FileInput>
              </FileRow>
              <Field>
                <Label>Fecha</Label>
                <DateGroup><DateIcon><FaCalendar size={16} /></DateIcon><Box $joined>21/10/2024</Box></DateGroup>
              </Field>
            </Columns>
            <Rule $m="52px 0 36px" />
            <Columns>
              <Quantity label="Longitud" />
              <Quantity label="Ancho Máximo" />
              <Quantity label="Profundidad Máxima" />
              <Quantity label="Volumen a Extraer" unit="m³" />
            </Columns>
            <Actions>
              <Action $w={131} $bg="#6abb70"><FaCheck size={20} />Guardar</Action>
              <Action $w={136} $bg="#47b8f2"><FaInfoCircle size={20} color="#a5dcf8" />Regresar</Action>
            </Actions>
          </Card>
        </Main>
        <Scrollbar>
          <svg width="7" height="5"><path d="M0 5 3.500 1 7 5z" fill="#505050" /></svg>
          <Thumb />
          <svg width="7" height="5"><path d="M0 0 3.500 4 7 0z" fill="#505050" /></svg>
        </Scrollbar>
      </Viewport>

      <Taskbar>
        <StartCell><svg width="16" height="16" viewBox="0 0 16 16" fill="#fff"><path d="M0 2.200 6.600 1.300V7.600H0zM7.400 1.200 16 0V7.600H7.400zM0 8.400H6.600V14.700L0 13.800zM7.400 8.400H16V16L7.400 14.800z" /></svg></StartCell>
        <SearchBox>
          <svg width="17" height="17" viewBox="0 0 17 17" fill="none" stroke="#222" strokeWidth="1.300"><circle cx="10.500" cy="6" r="5.300" /><path d="M6.700 10 .7 16" /></svg>
          <SearchText>Buscar</SearchText>
          <Autumn />
        </SearchBox>
        <TaskCell $gap={3}><TaskView /></TaskCell>
        {apps.map((a, i) => <TaskCell key={i} $active={a.active} $open={a.open}>{a.icon}</TaskCell>)}
        <Tray>
          <Weather>
            <svg width="23" height="22" viewBox="0 0 23 22"><defs><linearGradient id="sun" x2="0" y2="1"><stop stopColor="#f9b72b" /><stop offset="1" stopColor="#f0711c" /></linearGradient></defs><circle cx="11" cy="11" r="10.500" fill="url(#sun)" /><path fill="#b9d3f6" d="M11.500 17a3.200 3.200 0 0 1 .3-6.300 4 4 0 0 1 7.400.8A2.800 2.800 0 0 1 20 17z" /></svg>
            <span>30°C</span><span>Mayorm. soleado</span>
          </Weather>
          <TrayIcon><svg width="12" height="8" fill="none" stroke="#fff" strokeWidth="1.200"><path d="M.5 7 6 1.500 11.500 7" /></svg></TrayIcon>
          <TrayIcon><svg width="12" height="16" viewBox="0 0 12 16" fill="none" stroke="#fff" strokeWidth="1.200"><rect x=".7" y="4" width="7.500" height="8" rx="1.500" /><path d="M8.200 7.500 11 5.500v5L8.200 8.500M1.500 1.500q4-1.500 7 0M1.500 14.500q4 1.500 7 0" /></svg></TrayIcon>
          <TrayIcon><svg width="17" height="15" viewBox="0 0 17 15" fill="none" stroke="#fff" strokeWidth="1.100"><path d="M5 2.500h11v8H4.500V6M9 10.500v3M5.500 13.800H13M.6.8h4v4h-4zM2.600 4.800V13.800H6" /></svg></TrayIcon>
          <TrayIcon><svg width="17" height="14" viewBox="0 0 17 14" fill="none" stroke="#fff" strokeWidth="1.100"><path d="M.6 4.800h2.600L7 1.500v11L3.200 9.200H.6zM9.500 5q1.300 2 0 4M11.700 3.300q2.500 3.700 0 7.400M13.800 1.500q4 5.500 0 11" /></svg></TrayIcon>
          <Lang>ESP</Lang>
          <Clock>16:21<br />21/10/2024</Clock>
          <Notices><svg width="17" height="17" viewBox="0 0 17 17" fill="none" stroke="#fff" strokeWidth="1.200"><path d="M.8 1h15.400v11.500H11L8.500 15.300 6 12.500H.8z" /></svg></Notices>
          <PeekEdge />
        </Tray>
      </Taskbar>
    </Screen>
  );
}
